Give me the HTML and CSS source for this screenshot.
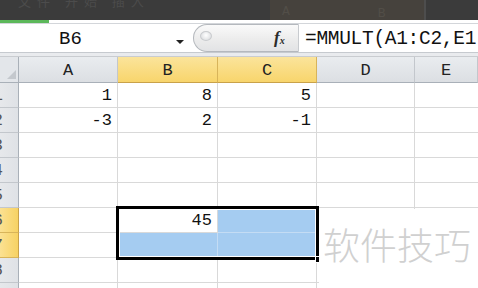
FILE: index.html
```html
<!DOCTYPE html>
<html lang="zh">
<head>
<meta charset="utf-8">
<title>MMULT</title>
<link rel="stylesheet" href="styles.css">
</head>
<body>
<div class="app">
  <div class="titlebar">
    <span class="ghost-title">文件 开始 插入</span>
    <div class="ghost-block"><span>A</span><span>B</span></div>
  </div>
  <div class="progress"><div class="progress-fill"></div></div>
  <div class="formulabar">
    <div class="namebox"><span class="name">B6</span><span class="arrow"></span></div>
    <div class="pill"><span class="knob"></span><span class="fx"><i>f</i><sub>x</sub></span></div>
    <div class="formula">=MMULT(A1:C2,E1:E3)</div>
  </div>
  <div class="gap"></div>
  <div class="sheet">
    <div class="grid">
      <div class="corner"><span class="tri"></span></div>
      <div class="colhead">A</div>
      <div class="colhead sel">B</div>
      <div class="colhead sel">C</div>
      <div class="colhead">D</div>
      <div class="colhead last">E</div>

      <div class="rowhead"><span>1</span></div>
      <div class="cell">1</div><div class="cell">8</div><div class="cell">5</div><div class="cell"></div><div class="cell last"></div>

      <div class="rowhead"><span>2</span></div>
      <div class="cell">-3</div><div class="cell">2</div><div class="cell">-1</div><div class="cell"></div><div class="cell last"></div>

      <div class="rowhead"><span>3</span></div>
      <div class="cell"></div><div class="cell"></div><div class="cell"></div><div class="cell"></div><div class="cell last"></div>

      <div class="rowhead"><span>4</span></div>
      <div class="cell"></div><div class="cell"></div><div class="cell"></div><div class="cell"></div><div class="cell last"></div>

      <div class="rowhead"><span>5</span></div>
      <div class="cell"></div><div class="cell"></div><div class="cell"></div><div class="cell"></div><div class="cell last"></div>

      <div class="rowhead sel"><span>6</span></div>
      <div class="cell"></div><div class="cell active">45</div><div class="cell hl"></div><div class="cell"></div><div class="cell last"></div>

      <div class="rowhead sel"><span>7</span></div>
      <div class="cell"></div><div class="cell hl"></div><div class="cell hl"></div><div class="cell"></div><div class="cell last"></div>

      <div class="rowhead"><span>8</span></div>
      <div class="cell"></div><div class="cell"></div><div class="cell"></div><div class="cell"></div><div class="cell last"></div>

      <div class="rowhead"><span>9</span></div>
      <div class="cell"></div><div class="cell"></div><div class="cell"></div><div class="cell"></div><div class="cell last"></div>
    </div>
    <div class="selection"><div class="handle"></div></div>
    <div class="watermark">软件技巧</div>
  </div>
</div>
</body>
</html>
```
FILE: styles.css
```css
* { box-sizing: border-box; }
html, body { margin: 0; padding: 0; }
body {
  width: 478px;
  height: 288px;
  overflow: hidden;
  background: #ffffff;
  font-family: "Liberation Mono", "DejaVu Sans Mono", monospace;
}
.app { width: 478px; height: 288px; overflow: hidden; }

.titlebar {
  height: 20px;
  background: #3b3b3b;
  position: relative;
  overflow: hidden;
}
.ghost-title {
  position: absolute;
  left: 18px;
  top: -9px;
  font-family: "Noto Sans CJK SC", sans-serif;
  font-size: 13px;
  color: #4c4c4c;
  letter-spacing: 6px;
}
.ghost-block {
  position: absolute;
  left: 270px;
  top: 0;
  width: 156px;
  height: 20px;
  background: #46423d;
  border-right: 2px solid #4d4d4d;
  display: flex;
  font-size: 13px;
  color: #524e48;
}
.ghost-block span:first-child { margin-left: 12px; margin-top: 4px; }
.ghost-block span:last-child { margin-left: 88px; margin-top: 6px; }

.progress {
  height: 3px;
  background: #ffffff;
}
.progress-fill {
  width: 49px;
  height: 3px;
  background: #5cb85a;
}

.formulabar {
  height: 30px;
  display: flex;
  background: #ffffff;
  border-top: 1px solid #d3d6da;
  border-bottom: 1px solid #c6cacf;
  padding-top: 1px;
}
.namebox {
  width: 193px;
  display: flex;
  align-items: center;
  position: relative;
}
.name {
  font-size: 19px;
  margin-left: 59px;
  color: #111;
  line-height: 28px;
}
.arrow {
  position: absolute;
  left: 176px;
  top: 15px;
  width: 0;
  height: 0;
  border-left: 4px solid transparent;
  border-right: 4px solid transparent;
  border-top: 4px solid #222;
}
.pill {
  width: 106px;
  height: 28px;
  margin-top: -1px;
  border: 1px solid #b4b8bd;
  border-right: 1px solid #c8cbcf;
  border-radius: 14px 0 0 14px;
  background: linear-gradient(#fafafa, #ececec 55%, #e2e3e5);
  display: flex;
  align-items: center;
  position: relative;
}
.knob {
  position: absolute;
  left: 6px;
  top: 6px;
  width: 12px;
  height: 10px;
  border-radius: 50%;
  background: radial-gradient(circle at 50% 40%, #ffffff, #d4d6d9);
  border: 1px solid #c9cbce;
}
.fx {
  position: absolute;
  left: 80px;
  top: 3px;
  font-family: "Liberation Serif", serif;
  font-weight: bold;
  font-size: 17px;
  color: #2a2a2a;
}
.fx i { font-style: italic; }
.fx sub { font-size: 10px; font-style: italic; vertical-align: -1px; }
.formula {
  flex: 1;
  padding-left: 6px;
  font-size: 19.5px;
  line-height: 28px;
  white-space: nowrap;
  overflow: hidden;
  color: #111;
  letter-spacing: -0.3px;
}

.gap {
  height: 4px;
  background: #e9ebee;
  border-bottom: 1px solid #c9ccd0;
}

.sheet { position: relative; }
.grid {
  display: grid;
  grid-template-columns: 19px 99px 100px 99px 98px 63px;
  grid-template-rows: 26px repeat(9, 25px);
  font-size: 17px;
  color: #111;
}
.corner {
  background: #e3e6ea;
  border-right: 1px solid #a9b0b8;
  border-bottom: 1px solid #a9b0b8;
  position: relative;
}
.tri {
  position: absolute;
  right: 2px;
  bottom: 3px;
  width: 0;
  height: 0;
  border-left: 9px solid transparent;
  border-bottom: 9px solid #c4c8cd;
}
.colhead {
  background: linear-gradient(#e9ecef, #dcdfe3);
  border-right: 1px solid #c3c7cc;
  border-bottom: 1px solid #a9b0b8;
  display: flex;
  align-items: center;
  justify-content: center;
  padding-top: 2px;
  color: #222;
}
.colhead.sel {
  background: linear-gradient(#fbe49b, #f8d56c);
  border-right-color: #d8b45a;
  border-bottom-color: #c9a24a;
}
.rowhead {
  background: linear-gradient(90deg, #e6e8eb, #dfe2e6);
  border-right: 1px solid #a9b0b8;
  border-bottom: 1px solid #c3c7cc;
  position: relative;
  overflow: hidden;
}
.rowhead span {
  position: absolute;
  right: 15px;
  top: 3px;
  color: #555;
}
.rowhead.sel {
  background: linear-gradient(90deg, #fbe192, #f7d263);
  border-right-color: #c9a24a;
  border-bottom-color: #d8b45a;
}
.cell {
  border-right: 1px solid #d9d9d9;
  border-bottom: 1px solid #d9d9d9;
  text-align: right;
  padding-right: 5px;
  line-height: 24px;
  padding-top: 1px;
  white-space: nowrap;
}
.cell.last { border-right: none; }
.cell.hl {
  background: #a5ccf1;
  border-right-color: #c4dcf4;
  border-bottom-color: #c4dcf4;
}
.cell.active { background: #ffffff; }

.selection {
  position: absolute;
  left: 116px;
  top: 149px;
  width: 203px;
  height: 54px;
  border: 3px solid #000;
  box-shadow: inset 0 0 0 1px #ffffff;
}
.handle {
  position: absolute;
  right: -6px;
  bottom: -6px;
  width: 7px;
  height: 7px;
  background: #000;
  border: 1px solid #fff;
}
.watermark {
  position: absolute;
  left: 319px;
  top: 152px;
  width: 159px;
  height: 80px;
  background: #ffffff;
  font-family: "Noto Sans CJK SC", sans-serif;
  font-weight: 300;
  font-size: 37px;
  color: #d0d0d0;
  padding-left: 4px;
  line-height: 1;
  padding-top: 17px;
  white-space: nowrap;
}
```
